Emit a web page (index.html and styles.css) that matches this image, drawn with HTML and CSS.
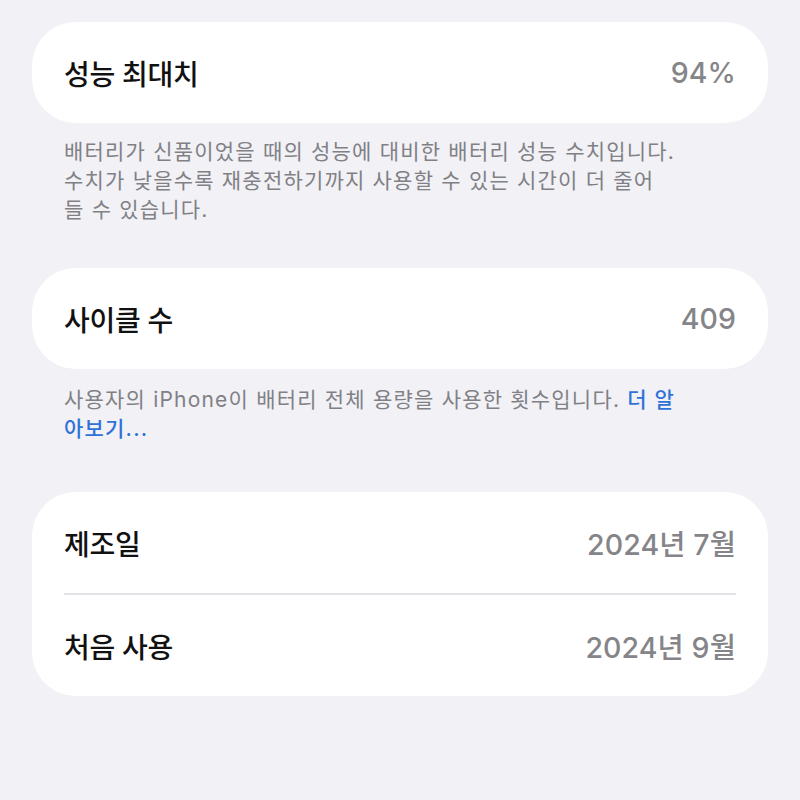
FILE: index.html
```html
<!DOCTYPE html>
<html lang="ko">
<head>
<meta charset="utf-8">
<link rel="stylesheet" href="styles.css">
</head>
<body>
<main class="page">
  <section class="group">
    <div class="card">
      <div class="row">
        <span class="label">성능 최대치</span>
        <span class="value">94%</span>
      </div>
    </div>
    <p class="footer footer-1">배터리가 신품이었을 때의 성능에 대비한 배터리 성능 수치입니다.<br>수치가 낮을수록 재충전하기까지 사용할 수 있는 시간이 더 줄어<br>들 수 있습니다.</p>
  </section>
  <section class="group">
    <div class="card">
      <div class="row">
        <span class="label">사이클 수</span>
        <span class="value">409</span>
      </div>
    </div>
    <p class="footer footer-2">사용자의 iPhone이 배터리 전체 용량을 사용한 횟수입니다. <a class="link">더 알<br>아보기...</a></p>
  </section>
  <section class="group">
    <div class="card">
      <div class="row">
        <span class="label">제조일</span>
        <span class="value">2024년 7월</span>
      </div>
      <div class="sep"></div>
      <div class="row">
        <span class="label">처음 사용</span>
        <span class="value">2024년 9월</span>
      </div>
    </div>
  </section>
</main>
</body>
</html>
```

FILE: styles.css
```css
html, body {
  margin: 0;
  padding: 0;
  background: #f1f1f6;
}
body {
  font-family: "Inter", "Noto Sans CJK KR", sans-serif;
  -webkit-font-smoothing: antialiased;
}
.page {
  padding: 22px 32px 0 32px;
  display: flex;
  flex-direction: column;
}
.group {
  display: flex;
  flex-direction: column;
}
.card {
  background: #ffffff;
  border-radius: 44px;
  padding: 0 32px;
}
.row {
  height: 101px;
  display: flex;
  align-items: center;
  justify-content: space-between;
}
.label {
  font-size: 28px;
  font-weight: 500;
  color: #111111;
  letter-spacing: -0.3px;
}
.value {
  font-size: 28.5px;
  font-weight: 500;
  color: #858589;
  letter-spacing: 0.1px;
}
.sep {
  height: 2px;
  background: #e3e3e7;
}
.footer {
  margin: 0;
  padding: 0 32px;
  font-size: 21px;
  line-height: 29px;
  letter-spacing: 1.2px;
  color: #808085;
  font-weight: 400;
}
.footer-1 {
  padding-top: 14px;
  padding-bottom: 44px;
}
.footer-2 {
  padding-top: 16px;
  padding-bottom: 49px;
}
.link {
  color: #2f72d8;
  font-weight: 500;
}
```
